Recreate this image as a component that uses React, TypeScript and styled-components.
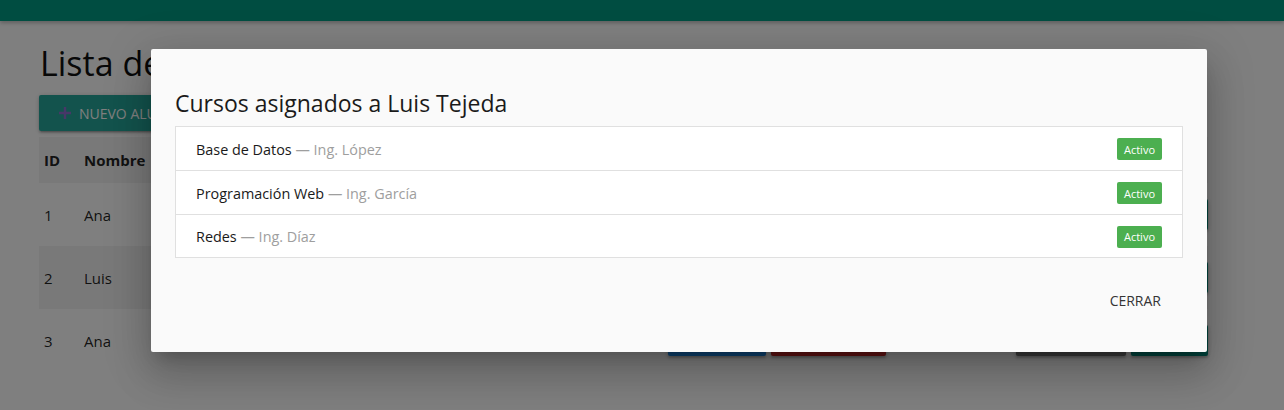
import styled, { createGlobalStyle } from 'styled-components';

const GlobalStyle = createGlobalStyle`
    * {
        box-sizing: border-box;
    }
    html, body {
        margin: 0;
        padding: 0;
        background: #ffffff;
        font-family: 'Open Sans', 'Noto Sans', sans-serif;
        color: rgba(0, 0, 0, 0.87);
        overflow: hidden;
    }
`;

interface Curso {
    nombre: string;
    profesor: string;
}

interface Alumno {
    id: number;
    nombre: string;
}

const cursos: Curso[] = [
    { nombre: 'Base de Datos', profesor: 'Ing. López' },
    { nombre: 'Programación Web', profesor: 'Ing. García' },
    { nombre: 'Redes', profesor: 'Ing. Díaz' },
];

const alumnos: Alumno[] = [
    { id: 1, nombre: 'Ana' },
    { id: 2, nombre: 'Luis' },
    { id: 3, nombre: 'Ana' },
];

const PlusIcon = () => (
    <svg width="14" height="14" viewBox="0 0 14 14">
        <path d="M7 1v12M1 7h12" stroke="#8e6fd0" strokeWidth="2.4" />
    </svg>
);

const App = () => {
    return (
        <Page>
            <GlobalStyle />
            <NavBar />
            <Main>
                <Heading>Lista de Alumnos</Heading>
                <NewButton>
                    <PlusIcon />
                    Nuevo alumno
                </NewButton>
                <Table>
                    <HeaderRow>
                        <IdCell>ID</IdCell>
                        <NameCell>Nombre</NameCell>
                    </HeaderRow>
                    {alumnos.map((a, i) => (
                        <Row key={i} striped={i % 2 === 1}>
                            <IdCell>{a.id}</IdCell>
                            <NameCell>{a.nombre}</NameCell>
                            <Actions>
                                <SmallButton color="#1e88e5" width={98}>Editar</SmallButton>
                                <SmallButton color="#c62828" width={115}>Eliminar</SmallButton>
                            </Actions>
                            <Actions>
                                <SmallButton color="#757575" width={110}>Cursos</SmallButton>
                                <SmallButton color="#00897b" width={77}>Asignar</SmallButton>
                            </Actions>
                        </Row>
                    ))}
                </Table>
            </Main>
            <Overlay />
            <Modal>
                <ModalContent>
                    <ModalTitle>Cursos asignados a Luis Tejeda</ModalTitle>
                    <Collection>
                        {cursos.map((c) => (
                            <CollectionItem key={c.nombre}>
                                <span>
                                    {c.nombre} <Teacher>— {c.profesor}</Teacher>
                                </span>
                                <Badge>Activo</Badge>
                            </CollectionItem>
                        ))}
                    </Collection>
                </ModalContent>
                <ModalFooter>
                    <FlatButton>Cerrar</FlatButton>
                </ModalFooter>
            </Modal>
        </Page>
    );
};

const Page = styled.div`
    position: relative;
    width: 1284px;
    height: 410px;
    overflow: hidden;
    background: #ffffff;
`;

const NavBar = styled.div`
    height: 21px;
    background-color: #009a82;
    box-shadow: 0 2px 4px rgba(0, 0, 0, 0.25);
`;

const Main = styled.div`
    padding: 22px 76px 0 39px;
`;

const Heading = styled.h1`
    margin: 0 0 12px 1px;
    font-size: 34px;
    line-height: 40px;
    font-weight: 400;
    color: #111;
`;

const NewButton = styled.button`
    display: inline-flex;
    align-items: center;
    gap: 7px;
    height: 36px;
    padding: 0 19px;
    border: none;
    border-radius: 2px;
    background-color: #26a69a;
    color: #fff;
    font-family: inherit;
    font-size: 14px;
    text-transform: uppercase;
    box-shadow: 0 2px 2px rgba(0, 0, 0, 0.14), 0 3px 1px -2px rgba(0, 0, 0, 0.12),
        0 1px 5px rgba(0, 0, 0, 0.2);
`;

const Table = styled.div`
    margin-top: 6px;
    display: flex;
    flex-direction: column;
`;

const HeaderRow = styled.div`
    display: flex;
    align-items: center;
    height: 46px;
    background-color: #f2f2f2;
    font-weight: 700;
    font-size: 15px;
`;

const Row = styled.div<{ striped?: boolean }>`
    display: flex;
    align-items: center;
    height: 63px;
    font-size: 15px;
    background-color: ${({ striped }) => (striped ? '#f2f2f2' : 'transparent')};
`;

const IdCell = styled.div`
    width: 40px;
    padding-left: 5px;
`;

const NameCell = styled.div`
    flex: 1;
    padding-left: 5px;
`;

const Actions = styled.div`
    display: flex;
    gap: 5px;
    margin-left: 130px;
    &:first-of-type {
        gap: 4px;
        margin-left: 0;
    }
`;

const SmallButton = styled.button<{ color: string; width: number }>`
    width: ${({ width }) => width}px;
    height: 31px;
    border: none;
    border-radius: 2px;
    background-color: ${({ color }) => color};
    color: #fff;
    font-family: inherit;
    font-size: 13px;
    text-transform: uppercase;
    box-shadow: 0 2px 2px rgba(0, 0, 0, 0.14), 0 1px 5px rgba(0, 0, 0, 0.2);
`;

const Overlay = styled.div`
    position: absolute;
    inset: 0;
    background-color: rgba(0, 0, 0, 0.5);
`;

const Modal = styled.div`
    position: absolute;
    top: 49px;
    left: 151px;
    width: 1056px;
    background-color: #fafafa;
    border-radius: 2px;
    box-shadow: 0 24px 38px 3px rgba(0, 0, 0, 0.14), 0 9px 46px 8px rgba(0, 0, 0, 0.12),
        0 11px 15px -7px rgba(0, 0, 0, 0.2);
`;

const ModalContent = styled.div`
    padding: 24px 24px 20px;
`;

const ModalTitle = styled.h4`
    margin: 14px 0 7px;
    font-size: 23px;
    line-height: 32px;
    font-weight: 400;
    color: #1a1a1a;
`;

const Collection = styled.ul`
    margin: 0;
    padding: 0;
    list-style: none;
    border: 1px solid #e0e0e0;
    background-color: #fff;
`;

const CollectionItem = styled.li`
    display: flex;
    align-items: center;
    justify-content: space-between;
    height: 44px;
    padding: 1px 20px 0;
    font-size: 14.4px;
    color: #1a1a1a;
    border-bottom: 1px solid #e0e0e0;
    &:last-child {
        height: 42px;
        border-bottom: none;
    }
`;

const Teacher = styled.span`
    color: #9e9e9e;
`;

const Badge = styled.span`
    display: inline-flex;
    align-items: center;
    justify-content: center;
    width: 45px;
    height: 22px;
    border-radius: 2px;
    background-color: #4caf50;
    color: #fff;
    font-size: 11px;
`;

const ModalFooter = styled.div`
    display: flex;
    justify-content: flex-end;
    padding: 4px 30px 34px;
`;

const FlatButton = styled.button`
    height: 36px;
    padding: 0 16px;
    border: none;
    background: transparent;
    color: #343434;
    font-family: inherit;
    font-size: 14px;
    text-transform: uppercase;
`;

export default App;
